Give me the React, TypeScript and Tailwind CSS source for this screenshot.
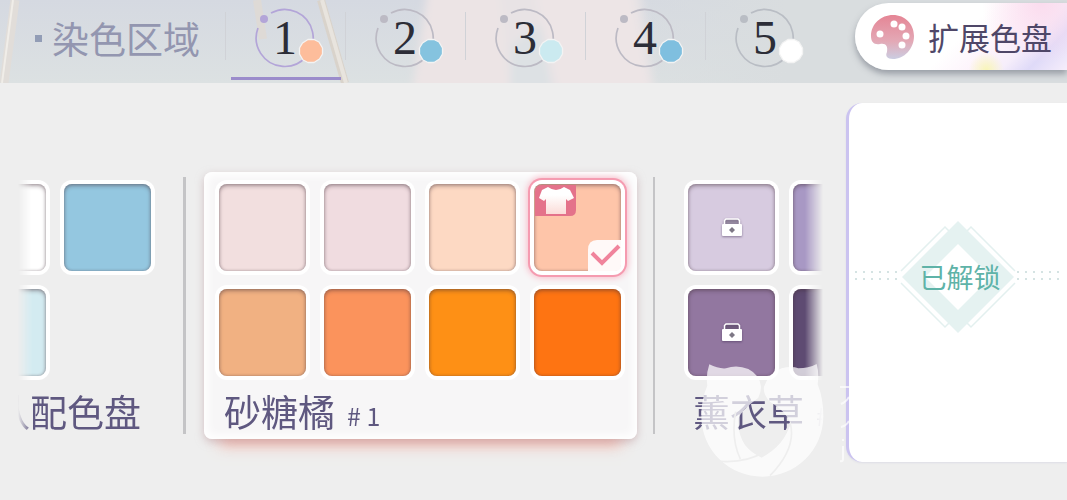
import type { ReactNode } from 'react';

const regions = [
  { id: 1, color: '#fdbd9b', ring: '#b3a5d8' },
  { id: 2, color: '#85c3df', ring: '#bcbac4' },
  { id: 3, color: '#cbeaf0', ring: '#bcbac4' },
  { id: 4, color: '#7fbfdf', ring: '#bcbac4' },
  { id: 5, color: '#ffffff', ring: '#b9bdc4' },
];

const tangerine = ['#f2dfdf', '#f0dce0', '#fdd9c3', '#fec5a9', '#f1b182', '#fb935c', '#fe9015', '#fe7412'];
const lavender = ['#d7cbe0', '#a898c4', '#9277a0', '#5e4b72'];

function HeaderBackdrop() {
  return (
    <svg className="absolute inset-0 h-full w-full" viewBox="0 0 1067 83" preserveAspectRatio="none" aria-hidden="true">
      <defs>
        <linearGradient id="sky" x1="0" y1="0" x2="0" y2="1">
          <stop offset="0" stopColor="#d5d9e1" />
          <stop offset="1" stopColor="#dce1e2" />
        </linearGradient>
        <linearGradient id="haze" x1="0" y1="0" x2="1" y2="0">
          <stop offset="0" stopColor="#d9dddf" stopOpacity="0" />
          <stop offset="0.400" stopColor="#d9dddf" />
        </linearGradient>
        <filter id="soft" x="-20%" y="-20%" width="140%" height="140%">
          <feGaussianBlur stdDeviation="4" />
        </filter>
      </defs>
      <rect width="1067" height="83" fill="url(#sky)" />
      <path d="M600 0H1067V83H600Z" fill="url(#haze)" />
      <g filter="url(#soft)">
        <path d="M428 -10H640L655 95H412Z" fill="#e8e3e5" />
        <path d="M428 -10H498L510 95H412Z" fill="#ece4e5" />
        <path d="M535 -10H630L652 95H560Z" fill="#ede5e6" />
        <path d="M512 45L540 25L552 90H510Z" fill="#dde1e4" />
      </g>
      <path d="M15 0L4 83" stroke="#e1ddd9" strokeWidth="9" />
      <path d="M13 0L2 83" stroke="#f0ede8" strokeWidth="2" />
      <path d="M257 0L263 39" stroke="#dedad6" strokeWidth="8" />
      <path d="M321 0L345 83" stroke="#d9d3cb" strokeWidth="8" />
      <path d="M322 0L346 83" stroke="#e8e4de" strokeWidth="4" />
    </svg>
  );
}

function RegionTab({ id, color, ring, active }: { id: number; color: string; ring: string; active: boolean }) {
  return (
    <button
      type="button"
      aria-pressed={active}
      className="relative flex h-full w-[120px] shrink-0 justify-center pt-2"
    >
      <span className="absolute top-3 left-0 h-12 w-px bg-[#d0d2d7]" />
      <span className="relative flex h-15 w-15 items-center justify-center font-['Liberation_Serif',serif] text-[48px] leading-none text-[#2c2d37]">
        <svg className="absolute inset-0" width="60" height="60" viewBox="0 0 60 60" fill="none" aria-hidden="true">
          <path d="M16 5A28.500 28.500 0 1 1 3 20" stroke={ring} strokeWidth="1.700" />
          <circle cx="9" cy="11" r="4" fill={ring} />
        </svg>
        <span className="relative">{id}</span>
        <svg className="absolute right-[-9px] bottom-1" width="26" height="26" viewBox="0 0 26 26" aria-hidden="true">
          <path
            d="M10 1.500H16L21 4L24.500 10V16L21.500 21L16 24.500H10L5 22L1.500 16V10L4.500 5Z"
            fill={color}
            stroke="#f3f3f3"
            strokeWidth="1.300"
            strokeLinejoin="round"
          />
        </svg>
      </span>
      {active && <span className="absolute right-1 bottom-[3px] left-1.5 h-[3px] bg-[#9b8ccb]" />}
    </button>
  );
}

function PaletteIcon() {
  return (
    <svg width="44" height="44" viewBox="0 0 44 44" aria-hidden="true">
      <defs>
        <linearGradient id="palette" x1="0" y1="0" x2="0" y2="1">
          <stop offset="0" stopColor="#e58595" />
          <stop offset="0.600" stopColor="#e3a9b6" />
          <stop offset="1" stopColor="#cbcde2" />
        </linearGradient>
      </defs>
      <path
        d="M22 0C34 0 43 9 43 21C43 34 33 44 22 44C16 44 14 41 16 37C17 31 15 28 9 29C3 30 0 27 0 21C0 9 10 0 22 0Z"
        fill="url(#palette)"
      />
      <g fill="#fff">
        <circle cx="9" cy="19" r="3.500" />
        <circle cx="23" cy="9" r="3.500" />
        <circle cx="31" cy="12" r="3.500" />
        <circle cx="35" cy="21" r="3.500" />
        <circle cx="31" cy="30" r="3.500" />
      </g>
    </svg>
  );
}

function LockIcon() {
  return (
    <svg width="24" height="22" viewBox="0 0 24 22" className="drop-shadow-[0_1px_1px_rgba(60,40,80,0.5)]" aria-hidden="true">
      <path d="M4.500 7V3.500L6 2H18L19.500 3.500V7" fill="rgba(80,70,90,0.35)" stroke="#fff" strokeWidth="1.500" />
      <rect x="2" y="7" width="20" height="12" rx="1" fill="#fff" />
      <path d="M12 10L15 13L12 16L9 13Z" fill="#7d7785" />
    </svg>
  );
}

function Swatch({ color, label, children, selected }: { color: string; label: string; children?: ReactNode; selected?: boolean }) {
  return (
    <button
      type="button"
      aria-label={label}
      aria-pressed={selected}
      className={
        selected
          ? 'relative h-[95px] w-[95px] shrink-0 rounded-xl bg-white p-1 shadow-[0_0_0_2px_#f59bb0,0_0_6px_3px_#f8bcc9]'
          : 'relative h-[95px] w-[95px] shrink-0 rounded-xl bg-white p-1'
      }
    >
      <span
        className="flex h-full w-full items-center justify-center rounded-lg shadow-[inset_0_2px_4px_rgba(70,50,60,0.4),inset_0_0_3px_rgba(70,50,60,0.35)]"
        style={{ backgroundColor: color }}
      >
        {children}
      </span>
    </button>
  );
}

function SelectedMarks() {
  return (
    <>
      <svg className="absolute top-[5px] left-[5px]" width="41" height="31" viewBox="0 0 41 31" aria-hidden="true">
        <defs>
          <linearGradient id="shirt" x1="0" y1="0" x2="0" y2="1">
            <stop offset="0.300" stopColor="#fff" />
            <stop offset="1" stopColor="#fbdcd8" />
          </linearGradient>
        </defs>
        <path d="M7 0H41V25Q41 31 35 31H0V7Q0 0 7 0Z" fill="#e4728a" />
        <path d="M13 2Q21 8 29 2L35 5L39 13L33 16L31 14V29H11V14L9 16L4 13L7 5Z" fill="url(#shirt)" />
      </svg>
      <svg className="absolute right-1 bottom-1" width="34" height="32" viewBox="0 0 34 32" aria-hidden="true">
        <path d="M10 1H34V26Q34 32 28 32H1V11Q1 1 10 1Z" fill="#fff9f8" />
        <path d="M5 14L15 24L32 7" fill="none" stroke="#f0849c" strokeWidth="4" />
      </svg>
    </>
  );
}

function UnlockedEmblem() {
  const dots = [3, 11, 19, 27, 35, 43, 165, 173, 181, 189, 197, 205];
  return (
    <svg className="absolute inset-0" width="210" height="120" viewBox="0 0 210 120" aria-hidden="true">
      <g fill="none" stroke="#e3f0ef" strokeWidth="1.500">
        <path d="M48 54L92 10L97 15M48 66L92 110L97 105M162 54L118 10L113 15M162 66L118 110L113 105" />
      </g>
      <path d="M105 4L161 60L105 116L49 60Z" fill="#e5f2f1" />
      <path d="M105 27L138 60L105 93L72 60Z" fill="#fff" />
      <g fill="#d5e3e3">
        {dots.map((x) => (
          <g key={x}>
            <rect x={x - 1} y="54" width="2" height="2" />
            <rect x={x - 1} y="61" width="2" height="2" />
          </g>
        ))}
      </g>
    </svg>
  );
}

function Watermark() {
  return (
    <div className="pointer-events-none absolute top-[355px] left-[690px] flex" aria-hidden="true">
      <svg width="140" height="130" viewBox="0 0 420 390">
        <path
          fill="rgba(255,255,255,0.72)"
          d="M58 28Q85 42 108 40Q140 28 175 42Q210 60 213 95Q213 112 205 128Q155 165 145 190Q142 235 165 270Q185 295 215 308Q285 270 301 205Q290 170 240 140Q218 118 222 95Q235 55 275 40Q305 32 325 40Q355 40 380 27Q388 55 383 88Q400 130 400 184A183 181 0 0 1 34 184Q34 130 52 92Q47 60 58 28Z"
        />
        <path
          d="M137 170Q122 250 151 312M65 316Q160 330 225 290Q275 260 301 205Q320 280 240 362"
          fill="none"
          stroke="#eeeeee"
          strokeWidth="5"
        />
      </svg>
      <svg
        className="ml-2.5 opacity-70"
        width="12"
        height="110"
        viewBox="0 0 12 110"
        fill="none"
        stroke="#fff"
        strokeWidth="2"
      >
        <path d="M0 32H10M1 49Q6 47 9 42M1 72Q6 71 9 66M3 84V86M3 91V104Q3 107 0 106" />
      </svg>
    </div>
  );
}

export default function App() {
  return (
    <div className="relative min-h-screen overflow-hidden bg-[#eeeeee] font-['Noto_Sans_CJK_SC',sans-serif]">
      <header className="relative flex h-[83px] overflow-hidden">
        <HeaderBackdrop />
        <div className="relative flex w-[225px] shrink-0 items-center gap-2.5 pb-1.5 pl-[35px]">
          <span className="h-[7px] w-[7px] bg-[#929db6]" />
          <h1 className="text-[37px] leading-none whitespace-nowrap text-[#9396b0]">染色区域</h1>
        </div>
        <nav className="relative flex" aria-label="染色区域">
          {regions.map((region) => (
            <RegionTab key={region.id} {...region} active={region.id === 1} />
          ))}
        </nav>
        <button
          type="button"
          className="relative mt-[3px] ml-[30px] flex h-[67px] min-w-0 flex-1 items-center gap-[13px] rounded-l-full bg-[radial-gradient(circle_at_62%_100%,#f8f5b8_0,transparent_12%),radial-gradient(circle_at_88%_0,#fbdcee_0,transparent_30%),linear-gradient(135deg,#ffffff_50%,#fdf3fb_66%,#f6eefb_76%,#dfdaf8_86%,#f6eefb_100%)] pl-4 shadow-[0_4px_6px_rgba(90,95,110,0.5)]"
        >
          <span className="shrink-0">
            <PaletteIcon />
          </span>
          <span className="text-[31px] leading-none whitespace-nowrap text-[#4f4768]">扩展色盘</span>
        </button>
      </header>

      <main className="flex items-start">
        <div className="ml-[18px] flex min-w-0 flex-1 items-start overflow-hidden [mask-image:linear-gradient(to_right,transparent,black_14px,black_calc(100%-18px),transparent)] pt-[89px] pb-10">
          <section className="flex w-[137px] shrink-0 flex-col items-end pt-2">
            <div className="grid grid-cols-[95px_95px] gap-2.5">
              <Swatch color="#ffffff" label="白色" />
              <Swatch color="#94c7e0" label="天蓝" />
              <Swatch color="#d3ebf1" label="浅青" />
            </div>
            <h2 className="flex h-[59px] items-center pt-1 pr-3.5 text-[37px] leading-none whitespace-nowrap text-[#5f5880]">默认配色盘</h2>
          </section>

          <span className="mt-[5px] ml-7 h-[257px] w-[3px] shrink-0 bg-[#c4c4c6]" />

          <section className="ml-[18px] w-[433px] shrink-0 rounded-lg bg-[#f7f6f7] px-[11px] pt-2 shadow-[inset_0_0_8px_4px_#ffffff,0_3px_8px_rgba(190,160,165,0.6),0_22px_14px_-16px_rgba(243,160,145,0.8)]">
            <div className="grid grid-cols-[95px_95px_95px_95px] gap-2.5">
              {tangerine.map((color, i) => (
                <Swatch key={color} color={color} label={`砂糖橘 ${i + 1}`} selected={i === 3}>
                  {i === 3 && <SelectedMarks />}
                </Swatch>
              ))}
            </div>
            <h2 className="flex h-[59px] items-center gap-3 pt-1 pl-[9px] text-[37px] leading-none whitespace-nowrap text-[#5f5880]">
              砂糖橘
              <span className="pt-2 text-[25px] leading-none"># 1</span>
            </h2>
          </section>

          <span className="mt-[5px] ml-4 h-[257px] w-[2px] shrink-0 bg-[#c4c4c6]" />

          <section className="ml-[29px] shrink-0 pt-2">
            <div className="grid grid-cols-[95px_95px] gap-2.5">
              {lavender.map((color, i) => (
                <Swatch key={color} color={color} label={`薰衣草 ${i + 1}`}>
                  <LockIcon />
                </Swatch>
              ))}
            </div>
            <h2 className="flex h-[59px] items-center gap-3 pt-1 pl-[9px] text-[37px] leading-none whitespace-nowrap text-[#5f5880]">
              薰衣草
              <span className="pt-2 text-[25px] leading-none">#</span>
            </h2>
          </section>
        </div>

        <aside className="mt-5 ml-[23px] flex h-[359px] w-[221px] shrink-0 items-center justify-center rounded-l-2xl border-l-[3px] border-[#cbc3f0] bg-white pb-3 shadow-[0_1px_2px_#dddde6]">
          <div className="relative flex h-[120px] w-[210px] items-center justify-center">
            <UnlockedEmblem />
            <span className="relative pl-1 text-[27px] leading-none text-[#5fb3a8]">已解锁</span>
          </div>
        </aside>
        <Watermark />
      </main>
    </div>
  );
}
